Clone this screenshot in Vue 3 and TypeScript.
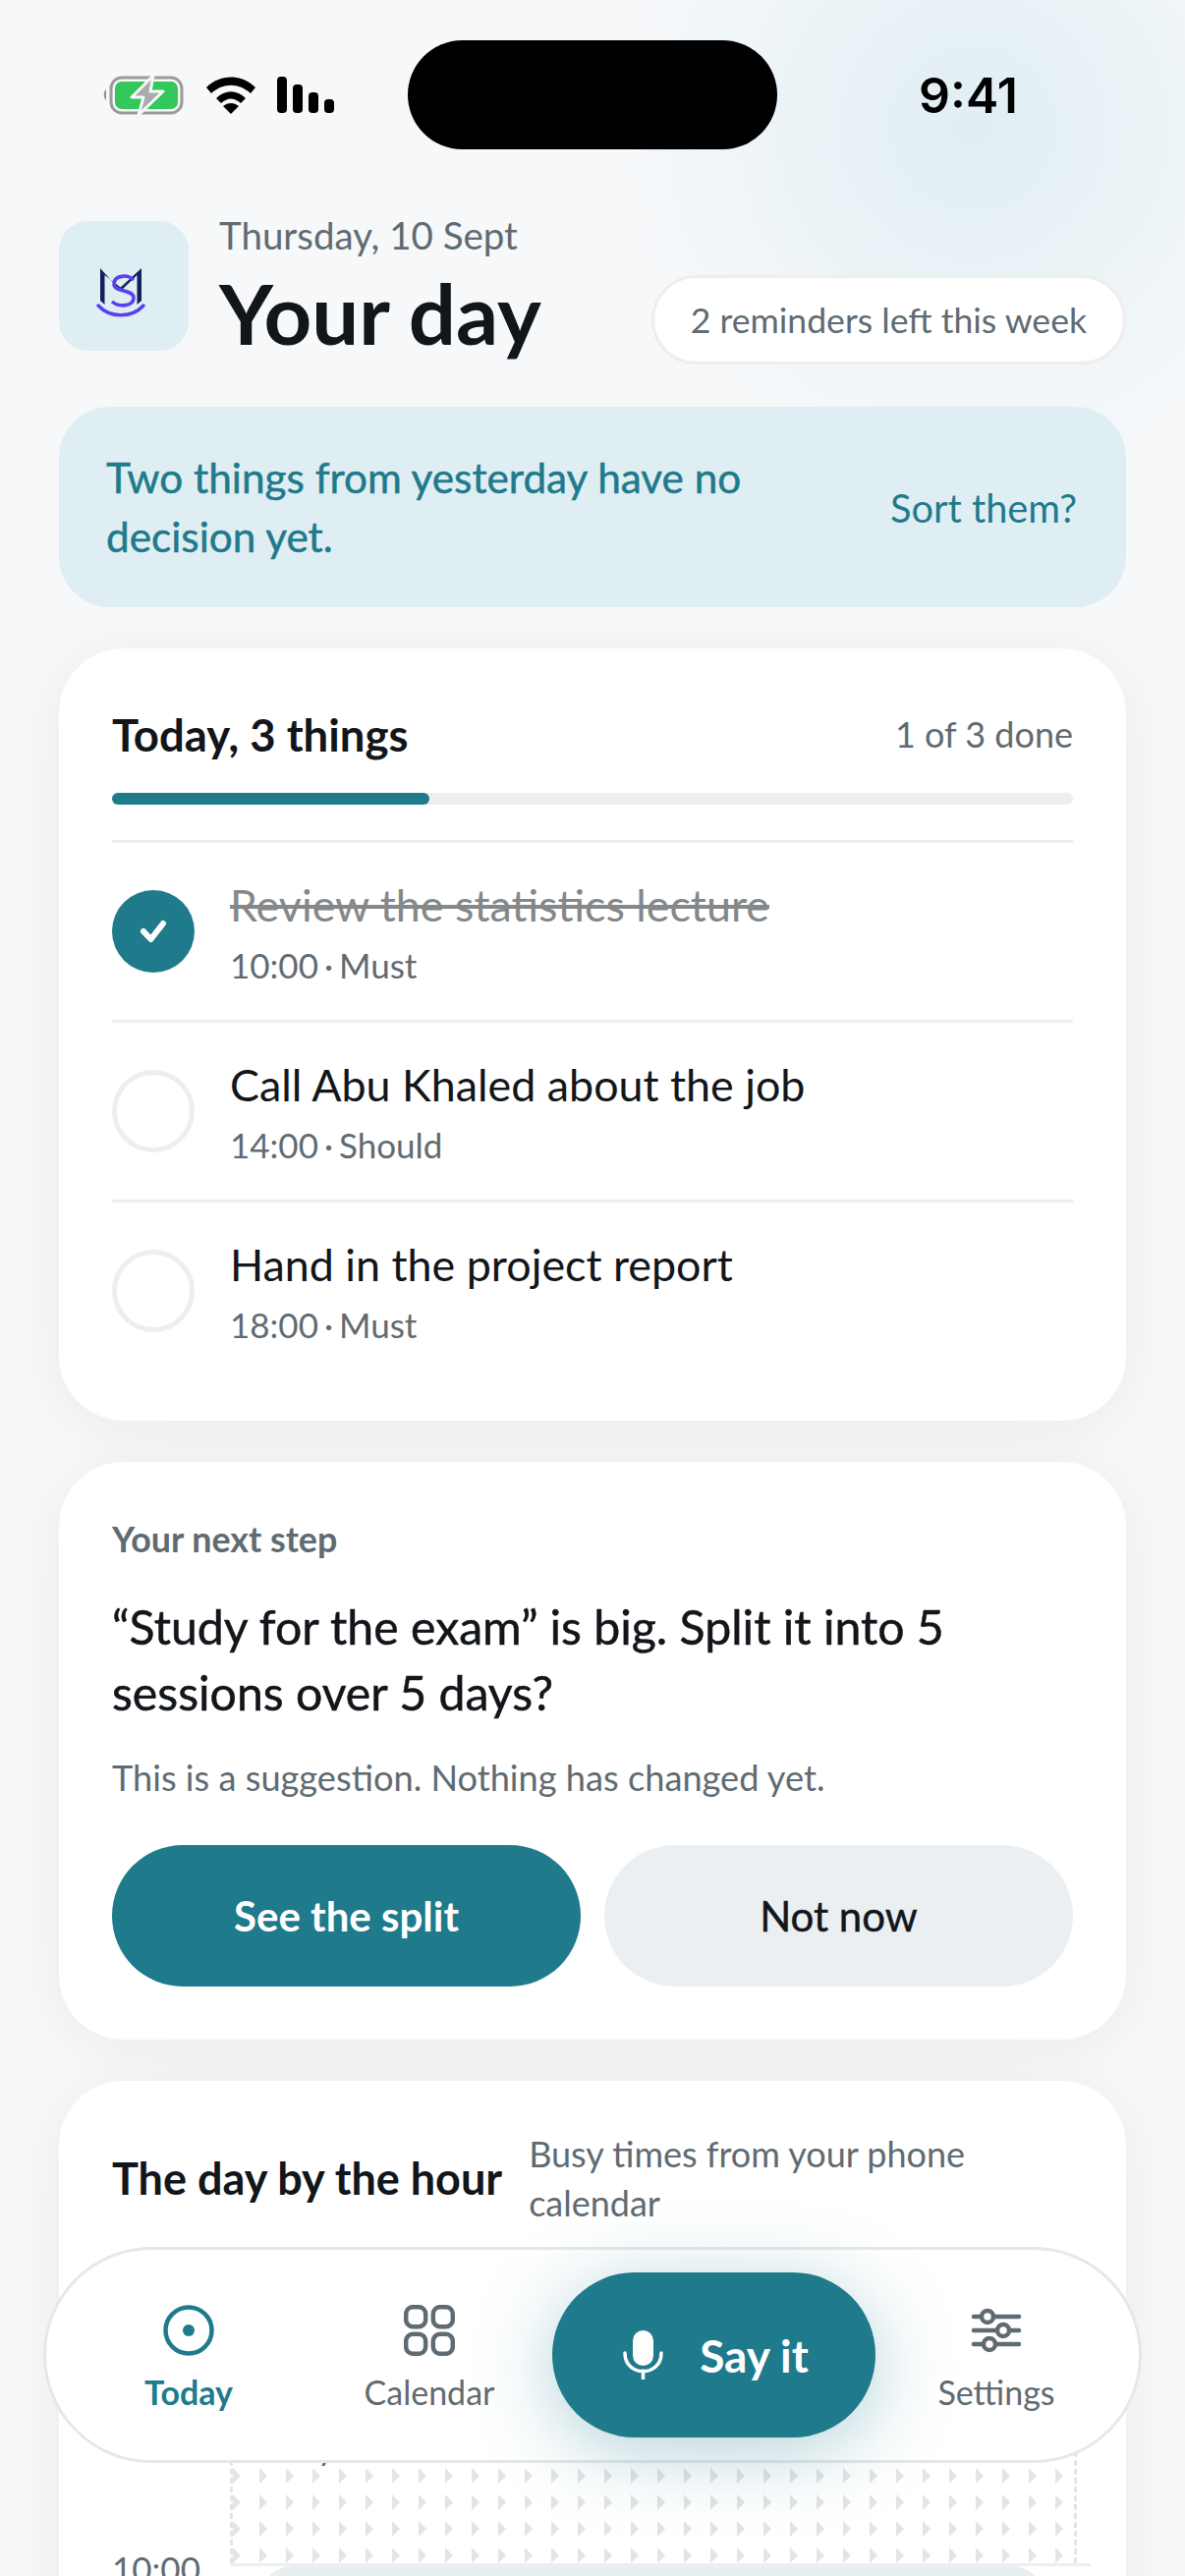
<template>
  <div class="page">
    <div class="status">
      <div class="status-icons">
        <svg width="84" height="42" viewBox="0 0 84 42">
          <path d="M4 15 C1 17 1 24 4 26 Z" fill="#8e8e8e" />
          <rect x="9" y="3" width="72" height="36" rx="11" fill="none" stroke="#9a9a9a" stroke-width="3" />
          <rect x="13" y="7" width="64" height="28" rx="7" fill="#34c759" />
          <path d="M52 1 L30 23 L42 23 L37 41 L62 17 L49 17 Z" fill="#a9abad" stroke="#f6f8fa" stroke-width="3" stroke-linejoin="round" />
        </svg>
        <svg width="52" height="38" viewBox="0 0 52 38">
          <path d="M1 11 C15 -3 37 -3 51 11 L46 17 C34 6 18 6 6 17 Z" fill="#000" />
          <path d="M11 22 C20 13 32 13 41 22 L36 27 C29 21 23 21 16 27 Z" fill="#000" />
          <path d="M18 30 C23 26 29 26 34 30 L26 38 Z" fill="#000" />
        </svg>
        <div class="signal">
          <span v-for="h in signalBars" :key="h" class="bar" :style="{ height: h + 'px' }"></span>
        </div>
      </div>
      <div class="island"></div>
      <div class="clock">9:41</div>
    </div>

    <header class="head">
      <div class="logo">
        <svg width="60" height="64" viewBox="0 0 60 64">
          <path d="M6 12 L6 45 L10.5 49 L10.5 19 L30 34 L28 36.5 Z" fill="#14215c" />
          <path d="M48 12 L48 45 L43.5 49 L43.5 19 L27 35 L25 33 Z" fill="#14215c" />
          <path d="M40 24 C33 17 20 20 20 28 C20 37 40 33 40 42 C40 51 25 52 18 46" fill="none" stroke="#5a3ff0" stroke-width="3.6" />
          <path d="M4 50 C16 63 38 63 50 50" fill="none" stroke="#5a3ff0" stroke-width="3.5" stroke-linecap="round" />
        </svg>
      </div>
      <div class="head-text">
        <div class="date">Thursday, 10 Sept</div>
        <h1 class="title">Your day</h1>
      </div>
      <div class="pill">2 reminders left this week</div>
    </header>

    <div class="banner">
      <p class="banner-text">Two things from yesterday have no decision yet.</p>
      <span class="banner-link">Sort them?</span>
    </div>

    <section class="card today">
      <div class="card-head">
        <h2 class="card-title">Today, 3 things</h2>
        <span class="done">1 of 3 done</span>
      </div>
      <div class="progress"><div class="progress-fill"></div></div>
      <ul class="tasks">
        <li v-for="task in tasks" :key="task.name" class="task">
          <span class="check" :class="{ 'check-on': task.done }">
            <svg v-if="task.done" width="84" height="84" viewBox="0 0 84 84">
              <path d="M32 42 L39.5 50 L52 34" fill="none" stroke="#fff" stroke-width="6" stroke-linecap="round" stroke-linejoin="round" />
            </svg>
          </span>
          <div>
            <div class="task-name" :class="{ 'task-done': task.done }">{{ task.name }}</div>
            <div class="task-meta">{{ task.time }} · {{ task.level }}</div>
          </div>
        </li>
      </ul>
    </section>

    <section class="card step">
      <div class="step-label">Your next step</div>
      <p class="step-title">“Study for the exam” is big. Split it into 5 sessions over 5 days?</p>
      <p class="step-note">This is a suggestion. Nothing has changed yet.</p>
      <div class="step-actions">
        <button class="btn btn-main">See the split</button>
        <button class="btn btn-soft">Not now</button>
      </div>
    </section>

    <section class="card hours">
      <div class="hours-head">
        <h2 class="card-title hours-title">The day by the hour</h2>
        <p class="hours-sub">Busy times from your phone calendar</p>
      </div>
      <div class="slot">
        <div class="hatch">
          <svg class="hatch-art" width="100%" height="100%">
            <defs>
              <pattern id="tri" width="27" height="27" patternUnits="userSpaceOnUse">
                <path d="M0 0 L8 8 L0 16 Z" fill="#e4e4e4" />
              </pattern>
            </defs>
            <rect width="100%" height="100%" fill="url(#tri)" />
          </svg>
          <span class="busy">Busy</span>
        </div>
      </div>
      <div class="next-row">
        <span class="hour">10:00</span>
        <div class="next-slot"><div class="block"></div></div>
      </div>
    </section>

    <nav class="nav">
      <div class="nav-item nav-on">
        <svg width="52" height="52" viewBox="0 0 52 52">
          <circle cx="26" cy="26" r="23.5" fill="none" stroke="currentColor" stroke-width="4.5" />
          <circle cx="26" cy="26" r="6" fill="currentColor" />
        </svg>
        <span>Today</span>
      </div>
      <div class="nav-item nav-cal">
        <svg width="52" height="52" viewBox="0 0 52 52" fill="none" stroke="currentColor" stroke-width="4.5">
          <rect x="2.2" y="2.2" width="20" height="20" rx="7" />
          <rect x="29.8" y="2.2" width="20" height="20" rx="7" />
          <rect x="2.2" y="29.8" width="20" height="20" rx="7" />
          <rect x="29.8" y="29.8" width="20" height="20" rx="7" />
        </svg>
        <span>Calendar</span>
      </div>
      <button class="say">
        <svg width="42" height="50" viewBox="0 0 42 50">
          <rect x="10" y="0" width="21" height="36" rx="10.5" fill="#fff" />
          <path d="M2 23 C2 48 39 48 39 23" fill="none" stroke="#fff" stroke-width="3.5" stroke-linecap="round" />
          <path d="M20.5 41 L20.5 49" stroke="#fff" stroke-width="3.5" stroke-linecap="round" />
        </svg>
        <span>Say it</span>
      </button>
      <div class="nav-item nav-set">
        <svg width="52" height="52" viewBox="0 0 52 52" fill="none" stroke="currentColor" stroke-width="4.5" stroke-linecap="round">
          <path d="M3 12 H10 M24 12 H49 M3 26 H26 M40 26 H49 M3 40 H12 M26 40 H49" />
          <circle cx="17" cy="12" r="6" />
          <circle cx="33" cy="26" r="6" />
          <circle cx="19" cy="40" r="6" />
        </svg>
        <span>Settings</span>
      </div>
    </nav>
  </div>
</template>

<script setup lang="ts">
interface Task {
  name: string;
  time: string;
  level: string;
  done: boolean;
}

const signalBars: number[] = [37, 29, 21, 14];

const tasks: Task[] = [
  { name: 'Review the statistics lecture', time: '10:00', level: 'Must', done: true },
  { name: 'Call Abu Khaled about the job', time: '14:00', level: 'Should', done: false },
  { name: 'Hand in the project report', time: '18:00', level: 'Must', done: false },
];
</script>

<style>
html,
body {
  margin: 0;
  background: #f6f8fa;
}
</style>

<style scoped>
.page {
  position: relative;
  box-sizing: border-box;
  width: 1206px;
  height: 2622px;
  padding: 41px 60px 0;
  overflow: hidden;
  font-family: Lato, "Noto Sans", sans-serif;
  color: #12161a;
  background:
    radial-gradient(circle 350px at 990px 130px, #e0eef3 0%, rgba(224, 238, 243, 0) 100%),
    #f6f8fa;
}

.status {
  display: flex;
  align-items: center;
  height: 111px;
  margin-bottom: 73px;
}

.status-icons {
  display: flex;
  align-items: center;
  gap: 21px;
  width: 311px;
  padding-left: 44px;
}

.signal {
  display: flex;
  align-items: flex-end;
  gap: 6px;
  height: 37px;
}

.bar {
  width: 10px;
  border-radius: 4px;
  background: #000;
}

.island {
  flex: none;
  width: 376px;
  height: 111px;
  border-radius: 56px;
  background: #000;
}

.clock {
  margin-left: 144px;
  font-family: Inter, "Liberation Sans", sans-serif;
  font-size: 50px;
  font-weight: 600;
  color: #000;
}

.head {
  display: flex;
  height: 146px;
}

.logo {
  display: flex;
  flex: none;
  align-items: center;
  justify-content: center;
  width: 132px;
  height: 132px;
  border-radius: 30px;
  background: #dfeef3;
}

.logo svg {
  margin-top: 4px;
}

.head-text {
  margin-left: 31px;
}

.date {
  margin-top: -9px;
  font-size: 38.5px;
  line-height: 46px;
  color: #5f6b72;
}

.title {
  margin: 8px 0 0;
  font-size: 85px;
  line-height: 96px;
  font-weight: 700;
}

.pill {
  align-self: flex-end;
  box-sizing: border-box;
  height: 91px;
  margin-left: auto;
  padding: 0 37px;
  border: 3px solid #eeeeee;
  border-radius: 46px;
  background: #fff;
  font-size: 35.6px;
  line-height: 85px;
  color: #5f6b72;
}

.banner {
  display: flex;
  align-items: center;
  justify-content: space-between;
  box-sizing: border-box;
  height: 204px;
  margin-top: 43px;
  padding: 0 50px 0 48px;
  border-radius: 52px;
  background: #dfeef3;
  color: #1f7a8c;
}

.banner-text {
  width: 730px;
  margin: 0;
  font-size: 42.3px;
  line-height: 60px;
  -webkit-text-stroke: 0.5px currentColor;
}

.banner-link {
  font-size: 39.8px;
}

.card {
  box-sizing: border-box;
  margin-top: 42px;
  border-radius: 66px;
  background: #fff;
  box-shadow: 0 8px 60px rgba(0, 0, 0, 0.06);
}

.today {
  height: 786px;
  padding: 54px 54px 42px;
}

.card-head {
  display: flex;
  align-items: center;
  justify-content: space-between;
  height: 66px;
}

.card-title {
  margin: 0;
  font-size: 45.5px;
  font-weight: 700;
  white-space: nowrap;
}

.hours-title {
  font-size: 45px;
}

.done {
  font-size: 36px;
  color: #5f6b72;
}

.progress {
  height: 12px;
  margin-top: 27px;
  border-radius: 6px;
  background: #ebeff2;
}

.progress-fill {
  width: 323px;
  height: 100%;
  border-radius: 6px;
  background: #1f7a8c;
}

.tasks {
  margin: 36px 0 0;
  padding: 0;
  list-style: none;
}

.task {
  display: flex;
  align-items: center;
  gap: 36px;
  box-sizing: border-box;
  height: 183px;
  border-top: 3px solid #eeeeee;
}

.check {
  flex: none;
  box-sizing: border-box;
  width: 84px;
  height: 84px;
  border: 5px solid #eeeeee;
  border-radius: 50%;
}

.check-on {
  border: 0;
  background: #1f7a8c;
}

.check svg {
  display: block;
}

.task-name {
  font-size: 44.8px;
  line-height: 58px;
}

.task-done {
  color: #84888a;
  text-decoration: line-through;
}

.task-meta {
  margin-top: 9px;
  font-size: 35px;
  line-height: 46px;
  word-spacing: -3px;
  color: #5f6b72;
}

.step {
  height: 588px;
  padding: 52px 54px 0;
}

.step-label {
  font-size: 35.8px;
  line-height: 54px;
  font-weight: 700;
  color: #5f6b72;
}

.step-title {
  margin: 28px 0 0;
  font-size: 48.2px;
  line-height: 67px;
  -webkit-text-stroke: 0.5px currentColor;
}

.step-note {
  margin: 28px 0 0;
  font-size: 36.2px;
  line-height: 50px;
  color: #5f6b72;
}

.step-actions {
  display: flex;
  gap: 24px;
  margin-top: 44px;
}

.btn {
  flex: 1;
  height: 144px;
  border: 0;
  border-radius: 72px;
  font-family: inherit;
  font-size: 42px;
  font-weight: 700;
}

.btn-main {
  background: #1f7a8c;
  color: #fff;
}

.btn-soft {
  background: #ebeff2;
  color: #12161a;
  font-weight: 400;
  -webkit-text-stroke: 0.5px currentColor;
}

.hours {
  height: 620px;
  padding: 49px 36px 0 54px;
}

.hours-head {
  display: flex;
  align-items: center;
  gap: 27px;
  height: 100px;
}

.hours-sub {
  width: 500px;
  margin: 0;
  font-size: 36px;
  line-height: 50px;
  color: #5f6b72;
}

.slot {
  height: 313px;
  margin: 29px 14px 0 0;
  padding-left: 120px;
}

.hatch {
  position: relative;
  box-sizing: border-box;
  height: 100%;
  border-left: 3px dashed #e4e4e4;
  border-right: 3px dashed #e4e4e4;
}

.hatch-art {
  display: block;
}

.busy {
  position: absolute;
  left: 31px;
  bottom: 98px;
  font-size: 34px;
  line-height: 40px;
  color: #5f6b72;
}

.next-row {
  display: flex;
  height: 60px;
}

.hour {
  flex: none;
  width: 120px;
  margin-top: -18px;
  font-size: 35px;
  line-height: 46px;
  color: #5f6b72;
}

.next-slot {
  flex: 1;
  height: 100%;
  padding: 0 49px 0 33px;
  border-top: 3px solid #eeeeee;
}

.block {
  height: 100%;
  border-radius: 30px;
  background: #e9eef0;
}

.nav {
  position: absolute;
  left: 44px;
  top: 2287px;
  display: flex;
  align-items: flex-start;
  box-sizing: border-box;
  width: 1118px;
  height: 220px;
  padding-left: 73px;
  border: 3px solid #e6e8e8;
  border-radius: 110px;
  background: #fff;
}

.nav-item {
  display: flex;
  flex: none;
  flex-direction: column;
  align-items: center;
  width: 144px;
  margin-top: 56px;
  font-size: 34px;
  color: #5f6b72;
}

.nav-item span {
  margin-top: 17px;
  line-height: 40px;
}

.nav-on {
  color: #1f7a8c;
  font-weight: 700;
}

.nav-cal {
  margin-left: 101px;
}

.nav-set {
  margin-left: 51px;
}

.say {
  display: flex;
  flex: none;
  align-items: center;
  justify-content: center;
  gap: 36px;
  width: 329px;
  height: 168px;
  margin: 23px 0 0 53px;
  padding-left: 10px;
  border: 0;
  border-radius: 84px;
  background: #1f7a8c;
  box-shadow: 0 14px 80px rgba(31, 122, 140, 0.34);
  color: #fff;
  font-family: inherit;
  font-size: 46px;
  font-weight: 700;
}
</style>
